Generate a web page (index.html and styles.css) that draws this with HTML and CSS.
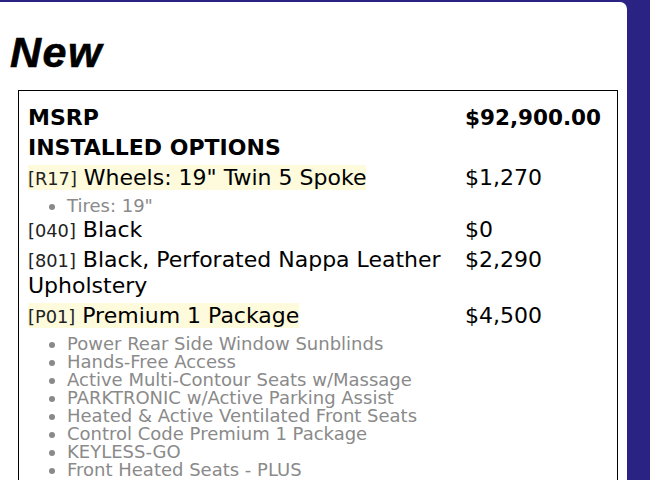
FILE: index.html
```html
<!DOCTYPE html>
<html>
<head>
<meta charset="utf-8">
<link rel="stylesheet" href="styles.css">
</head>
<body>
<div class="card">
  <h1 class="title">New</h1>
  <div class="box">
    <div class="row">
      <div class="label bold">MSRP</div>
      <div class="price bold">$92,900.00</div>
    </div>
    <div class="row">
      <div class="label bold">INSTALLED OPTIONS</div>
    </div>
    <div class="row">
      <div class="label"><span class="hl"><span class="code">[R17]</span> Wheels: 19" Twin 5 Spoke</span></div>
      <div class="price">$1,270</div>
    </div>
    <ul class="subs">
      <li>Tires: 19"</li>
    </ul>
    <div class="row">
      <div class="label"><span class="code">[040]</span> Black</div>
      <div class="price">$0</div>
    </div>
    <div class="row">
      <div class="label"><span class="code">[801]</span> Black, Perforated Nappa Leather Upholstery</div>
      <div class="price">$2,290</div>
    </div>
    <div class="row">
      <div class="label"><span class="hl"><span class="code">[P01]</span> Premium 1 Package</span></div>
      <div class="price">$4,500</div>
    </div>
    <ul class="subs">
      <li>Power Rear Side Window Sunblinds</li>
      <li>Hands-Free Access</li>
      <li>Active Multi-Contour Seats w/Massage</li>
      <li>PARKTRONIC w/Active Parking Assist</li>
      <li>Heated &amp; Active Ventilated Front Seats</li>
      <li>Control Code Premium 1 Package</li>
      <li>KEYLESS-GO</li>
      <li>Front Heated Seats - PLUS</li>
    </ul>
  </div>
</div>
</body>
</html>
```

FILE: styles.css
```css
html, body {
  margin: 0;
  padding: 0;
  background: #2b2383;
  overflow: hidden;
}
.card {
  margin-top: 2px;
  width: 627px;
  height: 600px;
  background: #ffffff;
  border-top-right-radius: 7px;
  padding-top: 26px;
  box-sizing: border-box;
}
.title {
  margin: 0 0 13px 10px;
  font-family: "Liberation Sans", Arial, sans-serif;
  font-weight: bold;
  font-style: italic;
  font-size: 43px;
  line-height: 49px;
  letter-spacing: 1.5px;
  -webkit-text-stroke: 0.6px #000;
  color: #000;
}
.box {
  margin-left: 18px;
  width: 600px;
  height: 420px;
  box-sizing: border-box;
  border: 1px solid #000;
  padding: 12px 9px 0;
  font-family: "DejaVu Sans", sans-serif;
  color: #000;
}
.row {
  display: grid;
  grid-template-columns: 437px 1fr;
  padding: 2px 0;
  font-size: 22px;
  line-height: 26px;
}
.bold {
  font-weight: bold;
}
.bold.price {
  font-size: 21.5px;
}
.price {
  white-space: nowrap;
}
.code {
  font-size: 17.8px;
  line-height: 1;
  color: #222;
}
.hl {
  background: #fdfbdc;
}
.subs {
  margin: 0;
  padding: 4px 0 0 39px;
  font-size: 18px;
  line-height: 18px;
  color: #8a8a8a;
}
```
